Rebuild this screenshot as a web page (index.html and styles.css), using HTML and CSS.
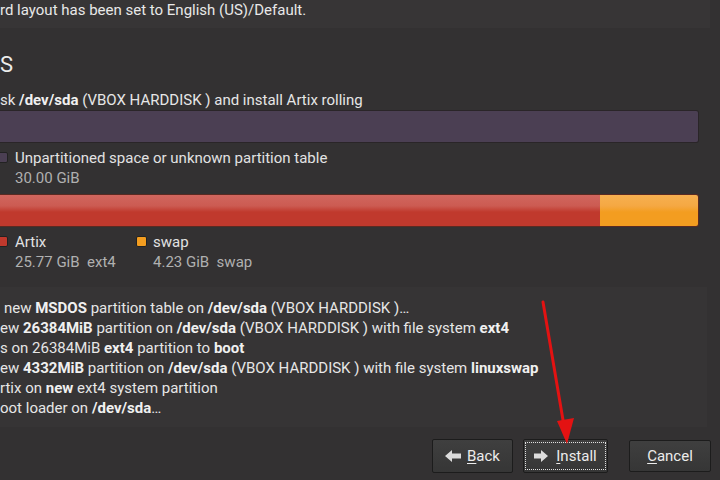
FILE: index.html
```html
<!DOCTYPE html>
<html>
<head>
<meta charset="utf-8">
<link rel="stylesheet" href="styles.css">
</head>
<body>
<div class="page">
  <div class="topband">rd layout has been set to English (US)/Default.</div>
  <div class="heading">S</div>
  <div class="diskline">sk <b>/dev/sda</b> (VBOX HARDDISK ) and install Artix rolling</div>
  <div class="bar bar-before">
    <div class="seg seg-free"></div>
  </div>
  <div class="legend">
    <div class="item item-clip">
      <span class="sq sq-free"></span>
      <div class="info">
        <div class="name">Unpartitioned space or unknown partition table</div>
        <div class="size">30.00 GiB</div>
      </div>
    </div>
  </div>
  <div class="bar bar-after">
    <div class="seg seg-root" style="width: 600px"></div>
    <div class="seg seg-swap"></div>
  </div>
  <div class="legend">
    <div class="item item-clip item-artix">
      <span class="sq sq-root"></span>
      <div class="info">
        <div class="name">Artix</div>
        <div class="size">25.77 GiB&nbsp; ext4</div>
      </div>
    </div>
    <div class="item">
      <span class="sq sq-swap"></span>
      <div class="info">
        <div class="name">swap</div>
        <div class="size">4.23 GiB&nbsp; swap</div>
      </div>
    </div>
  </div>
  <div class="summary">
    <div class="line l1">new <b>MSDOS</b> partition table on <b>/dev/sda</b> (VBOX HARDDISK )…</div>
    <div class="line">ew <b>26384MiB</b> partition on <b>/dev/sda</b> (VBOX HARDDISK ) with file system <b>ext4</b></div>
    <div class="line">s on 26384MiB <b>ext4</b> partition to <b>boot</b></div>
    <div class="line">ew <b>4332MiB</b> partition on <b>/dev/sda</b> (VBOX HARDDISK ) with file system <b>linuxswap</b></div>
    <div class="line">rtix on <b>new</b> ext4 system partition</div>
    <div class="line">oot loader on <b>/dev/sda</b>…</div>
  </div>
  <div class="buttons">
    <div class="group">
      <button class="btn btn-back">
        <svg class="ico" width="16" height="12" viewBox="0 0 16 12"><polygon points="0,6 7,0 7,3.5 16,3.5 16,8.5 7,8.5 7,12" fill="#dcdcdc"/></svg>
        <span><u>B</u>ack</span>
      </button>
      <button class="btn btn-install">
        <span class="focus">
          <svg class="ico" width="14" height="12" viewBox="0 0 14 12"><polygon points="14,6 7,0 7,3.5 0,3.5 0,8.5 7,8.5 7,12" fill="#dcdcdc"/></svg>
          <span><u>I</u>nstall</span>
        </span>
      </button>
    </div>
    <button class="btn btn-cancel"><span><u>C</u>ancel</span></button>
  </div>
  <svg class="annot" width="720" height="480" viewBox="0 0 720 480">
    <line x1="543" y1="302" x2="564" y2="426" stroke="#e31212" stroke-width="3" stroke-linecap="round"/>
    <polygon points="557,421 574,418 567,444" fill="#e31212"/>
  </svg>
</div>
</body>
</html>
```
FILE: styles.css
```css
html, body {
  margin: 0;
  padding: 0;
  background: #333132;
}
body {
  width: 720px;
  height: 480px;
  overflow: hidden;
  font-family: Roboto, "Liberation Sans", sans-serif;
  color: #e6e6e6;
}
.page {
  position: relative;
  width: 720px;
  height: 480px;
  display: flex;
  flex-direction: column;
}
b { font-weight: 700; color: #f0f0f0; }

.topband {
  width: 710px;
  height: 28px;
  background: #373536;
  font-size: 15px;
  line-height: 20px;
  color: #e8e8e8;
}
.heading {
  margin-top: 23px;
  font-size: 22px;
  line-height: 28px;
  color: #ececec;
}
.diskline {
  margin-top: 11px;
  font-size: 15px;
  line-height: 20px;
}
.bar {
  width: 699px;
  height: 33px;
  box-sizing: border-box;
  display: flex;
  border: 1px solid #2a2528;
  border-left: none;
  border-radius: 0 3px 3px 0;
  overflow: hidden;
}
.seg { height: 100%; }
.seg-free {
  flex: 1;
  background: #4b3f53;
}
.seg-root {
  background: linear-gradient(#d0665e 0, #cc5b52 35%, #c0392d 55%, #c0392d 100%);
}
.seg-swap {
  flex: 1;
  background: linear-gradient(#f6b050 0, #f5a843 35%, #f39d20 55%, #f39d20 100%);
}
.bar-after { margin-top: 6px; border-color: #5a2a22; }

.legend {
  margin-top: 5px;
  display: flex;
}
.item {
  display: flex;
  gap: 6px;
}
.item-clip { margin-left: -3px; }
.item-artix { width: 139px; }
.sq {
  width: 9px;
  height: 9px;
  margin-top: 4px;
  border: 1px solid #222;
  border-radius: 2px;
  flex: none;
}
.sq-free { background: #4b3f53; }
.sq-root { background: #c0392d; }
.sq-swap { background: #f39d20; }
.item-clip .sq { margin-right: 1px; }
.info { font-size: 15px; line-height: 20px; }
.name { color: #e2e2e2; }
.size { color: #b0b0b0; }

.summary {
  margin-top: 15px;
  width: 707px;
  height: 140px;
  box-sizing: border-box;
  padding-top: 11px;
  background: #363435;
  font-size: 15px;
  line-height: 20px;
  overflow: hidden;
}
.line { white-space: nowrap; }
.l1 { padding-left: 4px; }

.buttons {
  margin-top: 12px;
  display: flex;
  justify-content: flex-end;
  padding-right: 9px;
  gap: 21px;
}
.group { display: flex; gap: 10px; }
.btn {
  height: 34px;
  box-sizing: border-box;
  border: 1px solid #1c1c1c;
  border-radius: 2px;
  background: linear-gradient(#3f3f3f, #363636);
  color: #ececec;
  font-family: Roboto, "Liberation Sans", sans-serif;
  font-size: 15px;
  display: flex;
  align-items: center;
  justify-content: center;
  padding: 0;
  gap: 6px;
}
.btn u { text-decoration-thickness: 1px; text-underline-offset: 2px; }
.btn-back { width: 81px; }
.btn-install { width: 85px; }
.btn-cancel { width: 82px; height: 32px; margin-top: 1px; }
.focus {
  width: 81px;
  height: 28px;
  box-sizing: border-box;
  border: 1px dotted #e0e0e0;
  display: flex;
  align-items: center;
  justify-content: center;
  gap: 8px;
}
.annot {
  position: absolute;
  left: 0;
  top: 0;
  pointer-events: none;
}
```
